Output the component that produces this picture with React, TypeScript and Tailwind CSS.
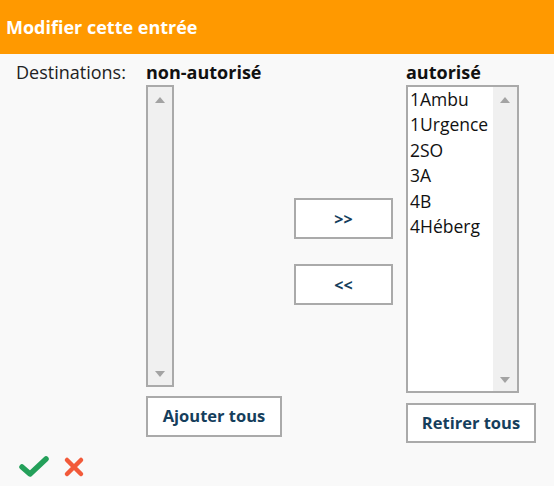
import React from "react";

const font = { fontFamily: '"Open Sans", "Liberation Sans", sans-serif' };

function UpArrow() {
  return (
    <svg width="10" height="6" viewBox="0 0 10 6">
      <polygon points="5,0 10,6 0,6" fill="#a3a3a3" />
    </svg>
  );
}
function DownArrow() {
  return (
    <svg width="10" height="6" viewBox="0 0 10 6">
      <polygon points="0,0 10,0 5,6" fill="#a3a3a3" />
    </svg>
  );
}

export default function App() {
  const items = ["1Ambu", "1Urgence", "2SO", "3A", "4B", "4Héberg"];
  return (
    <div className="w-[554px] h-[486px] bg-[#f9f9f9] text-[#222] overflow-hidden" style={font}>
      <div className="h-[54px] bg-[#ff9900] flex items-center px-[6px] text-white font-bold text-[18px]">
        Modifier cette entrée
      </div>
      <div className="flex pt-[7px]">
        <div className="w-[146px] pl-[16px] text-[18px] leading-[22px]">Destinations:</div>
        <div className="w-[136px] flex flex-col">
          <div className="h-[24px] font-bold text-[18px] leading-[22px] text-[#111]">non-autorisé</div>
          <div className="h-[302px] w-[28px] border-2 border-[#aaa] bg-[#f0f0f0] flex flex-col items-center justify-between pt-[10px] pb-[8px]">
            <UpArrow />
            <DownArrow />
          </div>
          <button className="mt-[9px] h-[41px] w-[136px] border-2 border-[#aaa] bg-white font-bold text-[16.5px] text-[#153e5c]">
            Ajouter tous
          </button>
        </div>
        <div className="ml-[12px] w-[99px] flex flex-col pt-[137px] gap-[25px]">
          <button className="h-[41px] w-[99px] border-2 border-[#aaa] bg-white font-bold text-[16px] text-[#153e5c]">
            &gt;&gt;
          </button>
          <button className="h-[41px] w-[99px] border-2 border-[#aaa] bg-white font-bold text-[16px] text-[#153e5c]">
            &lt;&lt;
          </button>
        </div>
        <div className="ml-[13px] flex flex-col">
          <div className="h-[24px] font-bold text-[18px] leading-[22px] text-[#111]">autorisé</div>
          <div className="h-[308px] w-[113px] border-2 border-[#aaa] bg-white flex">
            <div className="flex-1 pl-[2px] text-[17.5px] leading-[25.4px] text-[#111]">
              {items.map((it) => (
                <div key={it}>{it}</div>
              ))}
            </div>
            <div className="w-[24px] bg-[#f0f0f0] flex flex-col items-center justify-between pt-[10px] pb-[8px]">
              <UpArrow />
              <DownArrow />
            </div>
          </div>
          <button className="mt-[10px] h-[40px] w-[130px] border-2 border-[#aaa] bg-white font-bold text-[16.5px] text-[#153e5c]">
            Retirer tous
          </button>
        </div>
      </div>
      <div className="flex items-center gap-[14px] pl-[19px] mt-[13px]">
        <svg width="30" height="22" viewBox="0 0 30 22">
          <polyline points="3,11 11,18 27,3" fill="none" stroke="#24a05a" strokeWidth="5.5" strokeLinecap="round" strokeLinejoin="round" />
        </svg>
        <svg width="22" height="22" viewBox="0 0 22 22">
          <path d="M4 4 L18 18 M18 4 L4 18" stroke="#f25a3a" strokeWidth="4.5" strokeLinecap="round" />
        </svg>
      </div>
    </div>
  );
}
